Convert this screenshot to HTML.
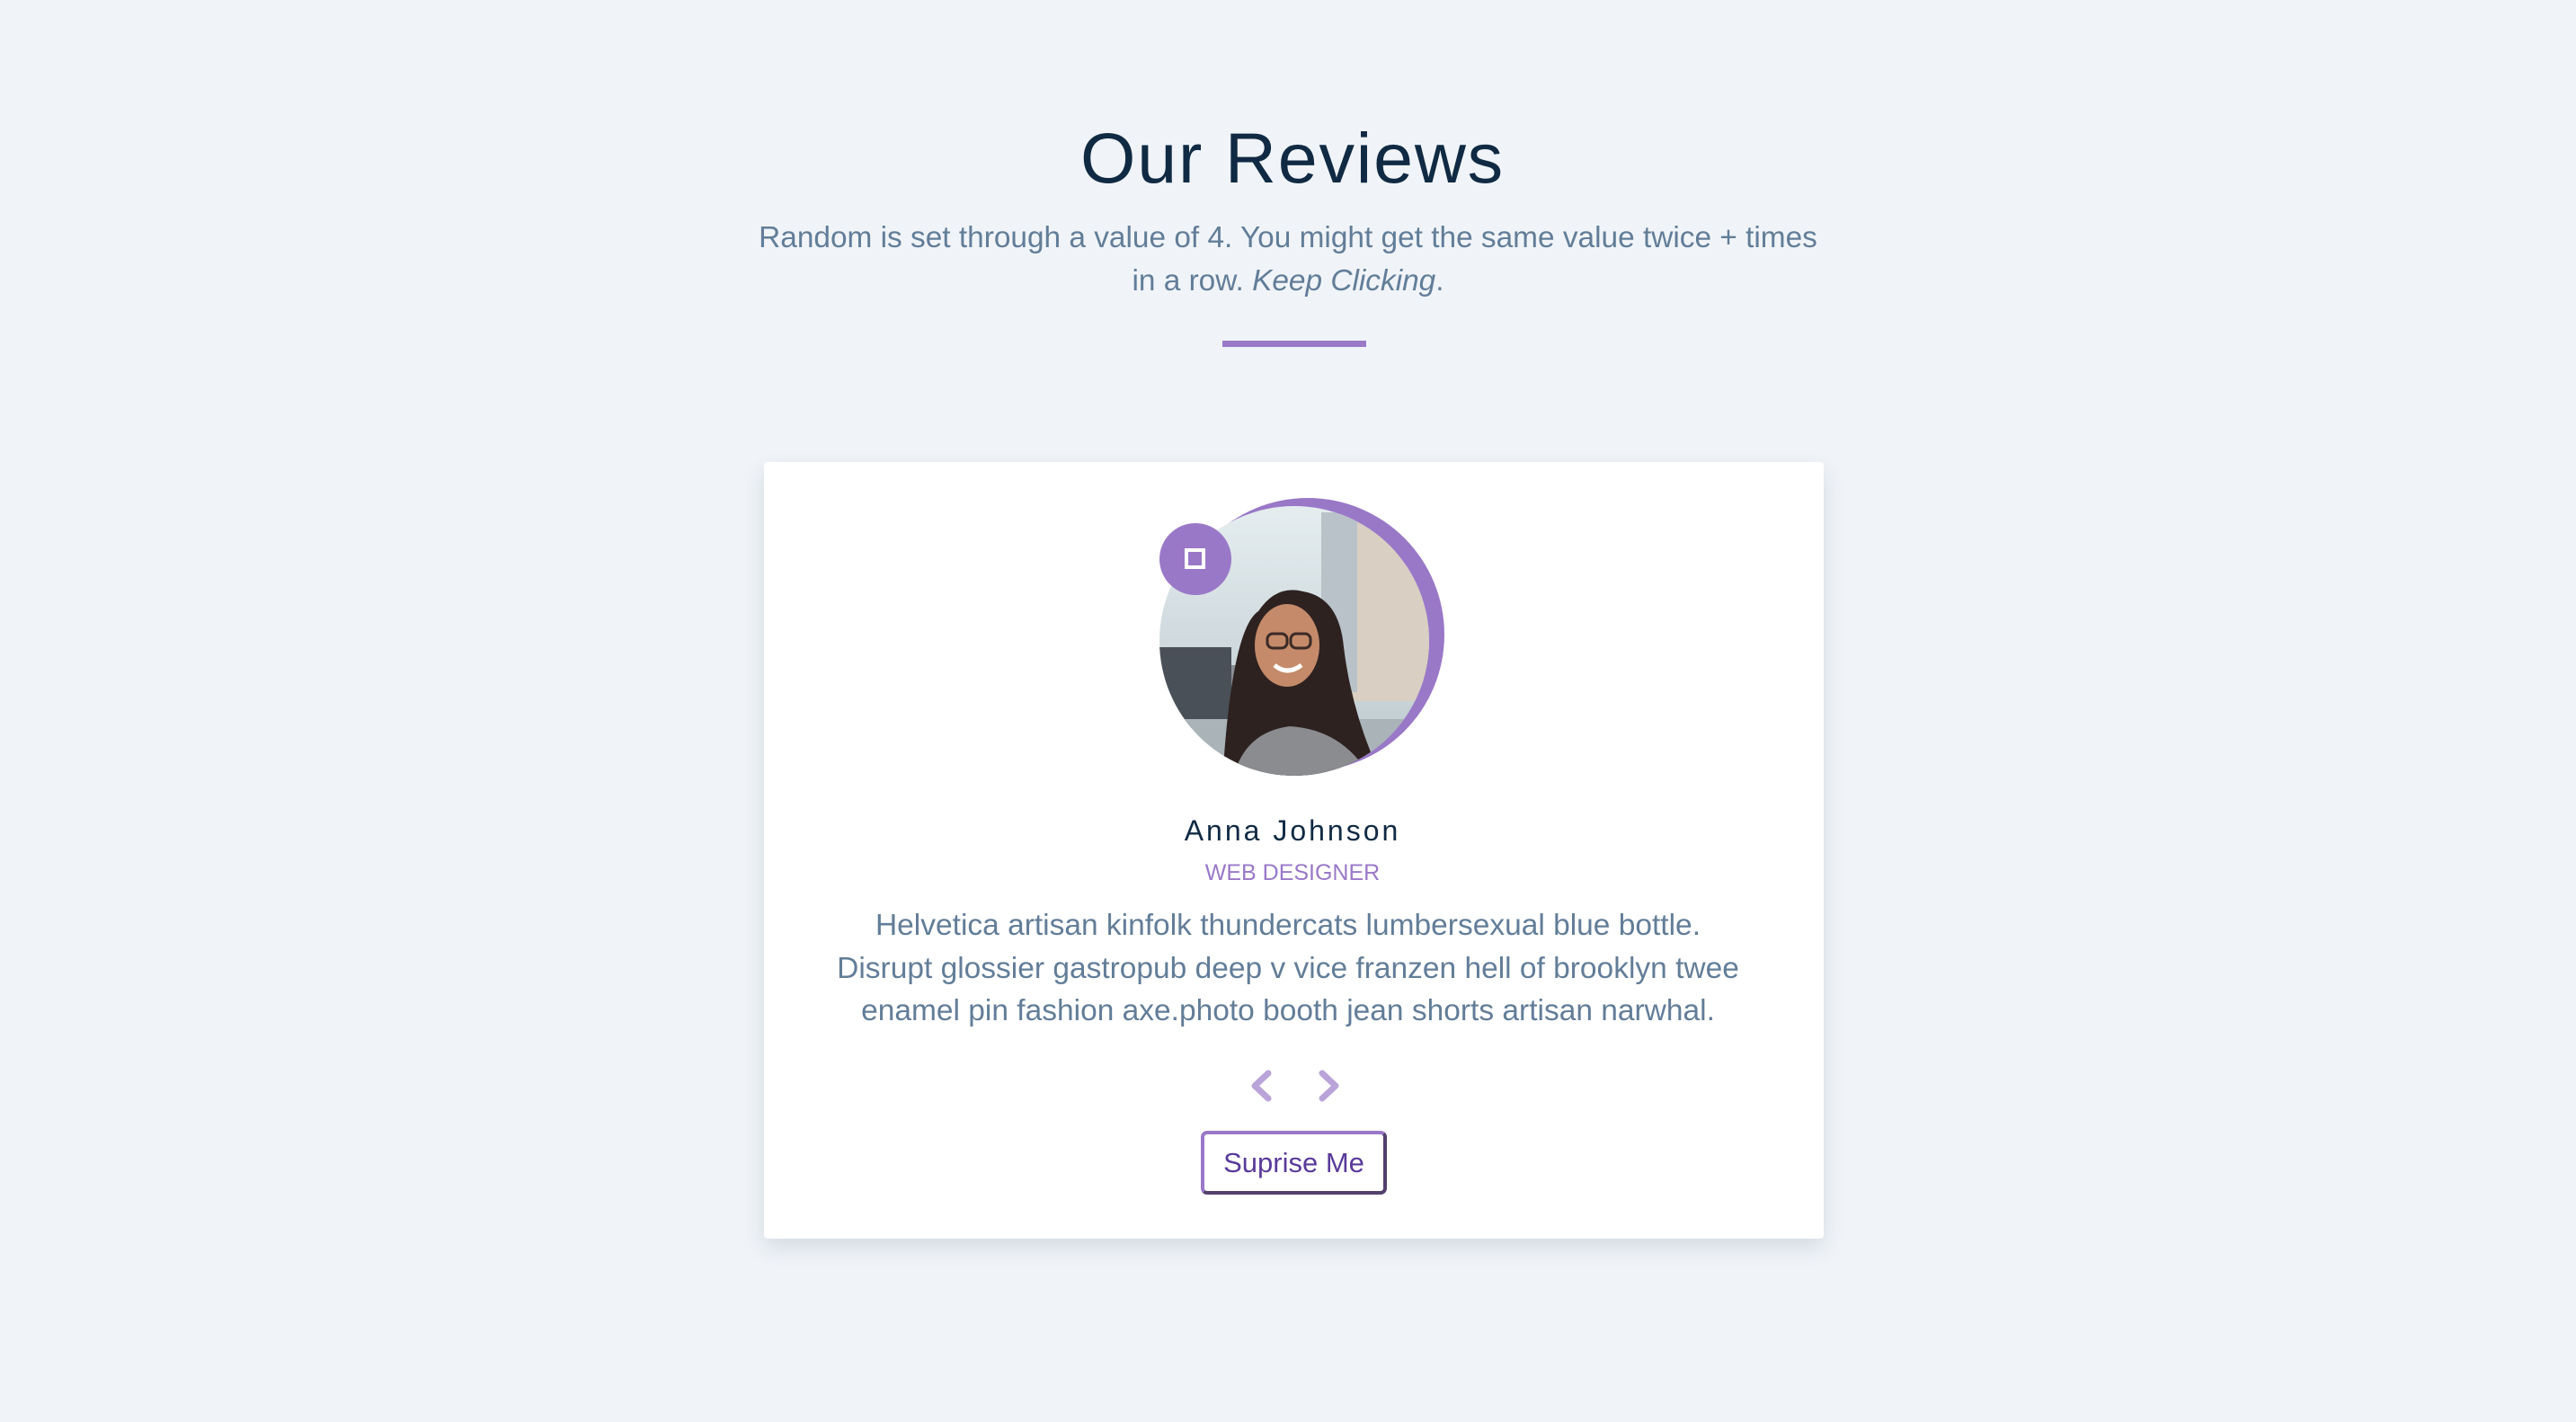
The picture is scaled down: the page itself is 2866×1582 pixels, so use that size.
<!DOCTYPE html>
<html><head><meta charset="utf-8"><style>
*{margin:0;padding:0;box-sizing:border-box}
body{width:2866px;height:1582px;background:#f0f4f8;font-family:"Liberation Sans",sans-serif;position:relative;overflow:hidden}
.c{position:absolute;left:0;width:2866px;text-align:center;white-space:nowrap}
h1{font-weight:normal;font-size:79px;letter-spacing:1.8px;color:#102a43;top:126px;line-height:100px;padding-left:10px}
.sub{font-size:33.4px;color:#627d98;line-height:48px;top:241px}
.bar{position:absolute;left:1360px;top:379px;width:160px;height:7px;background:#9a78c8}
.card{position:absolute;left:850px;top:514px;width:1179px;height:864px;background:#fff;border-radius:4px;box-shadow:0 10px 24px rgba(16,42,67,.12)}
.name{font-size:32px;letter-spacing:3px;color:#102a43;top:902px;line-height:44px;padding-left:10px}
.role{font-size:25px;color:#9a78c8;top:953px;line-height:36px;padding-left:10px}
.txt{font-size:33.5px;color:#627d98;line-height:47.5px;top:1006px}
.btn{position:absolute;left:1336px;top:1258px;width:207px;height:71px;border:4px solid #9a78c8;border-right-color:#53406f;border-bottom-color:#53406f;border-radius:7px;font-size:31px;color:#5a3a9a;text-align:center;line-height:64px}
</style></head><body>
<h1 class="c">Our Reviews</h1>
<div class="c sub">Random is set through a value of 4. You might get the same value twice + times<br>in a row. <i>Keep Clicking</i>.</div>
<div class="bar"></div>
<div class="card"></div>
<svg style="position:absolute;left:1280px;top:545px" width="340" height="330" viewBox="1280 545 340 330">
<defs><clipPath id="cp"><circle cx="1440" cy="713" r="150"/></clipPath>
<linearGradient id="sky" x1="0" y1="0" x2="0" y2="1"><stop offset="0" stop-color="#e6eef0"/><stop offset="1" stop-color="#b9c6cc"/></linearGradient></defs>
<circle cx="1455" cy="706" r="152" fill="#9a78c8"/>
<g clip-path="url(#cp)">
<rect x="1280" y="555" width="330" height="320" fill="url(#sky)"/>
<rect x="1490" y="560" width="120" height="220" fill="#d9cfc2"/>
<rect x="1470" y="570" width="40" height="200" fill="#b8c2c8"/>
<rect x="1290" y="720" width="80" height="90" fill="#4a5058"/>
<rect x="1370" y="740" width="60" height="50" fill="#8a8f94"/>
<rect x="1280" y="800" width="330" height="80" fill="#a9b3b8"/>
<path d="M1360 870 Q1370 700 1400 680 Q1420 650 1450 658 Q1490 665 1495 720 Q1505 800 1540 870Z" fill="#2e2220"/>
<ellipse cx="1432" cy="718" rx="36" ry="46" fill="#c48a6a"/>
<path d="M1370 875 Q1380 815 1435 808 Q1500 812 1530 875Z" fill="#8a8c90"/>
<rect x="1410" y="705" width="22" height="16" rx="6" fill="none" stroke="#3a2a26" stroke-width="3"/>
<rect x="1436" y="705" width="22" height="16" rx="6" fill="none" stroke="#3a2a26" stroke-width="3"/>
<path d="M1418 740 Q1432 752 1448 740" stroke="#fff" stroke-width="5" fill="none"/>
</g>
<circle cx="1330" cy="622" r="40" fill="#9a78c8"/>
<rect x="1320" y="612" width="19" height="19" fill="none" stroke="#fff" stroke-width="4"/>
</svg>
<div class="c name">Anna Johnson</div>
<div class="c role">WEB DESIGNER</div>
<div class="c txt">Helvetica artisan kinfolk thundercats lumbersexual blue bottle.<br>Disrupt glossier gastropub deep v vice franzen hell of brooklyn twee<br>enamel pin fashion axe.photo booth jean shorts artisan narwhal.</div>
<svg style="position:absolute;left:1380px;top:1185px" width="120" height="45">
<path d="M31 9 L16 23 L31 37" stroke="#b9a3d9" stroke-width="7" fill="none" stroke-linecap="round" stroke-linejoin="round"/>
<path d="M91 9 L106 23 L91 37" stroke="#b9a3d9" stroke-width="7" fill="none" stroke-linecap="round" stroke-linejoin="round"/>
</svg>
<div class="btn">Suprise Me</div>
</body></html>
